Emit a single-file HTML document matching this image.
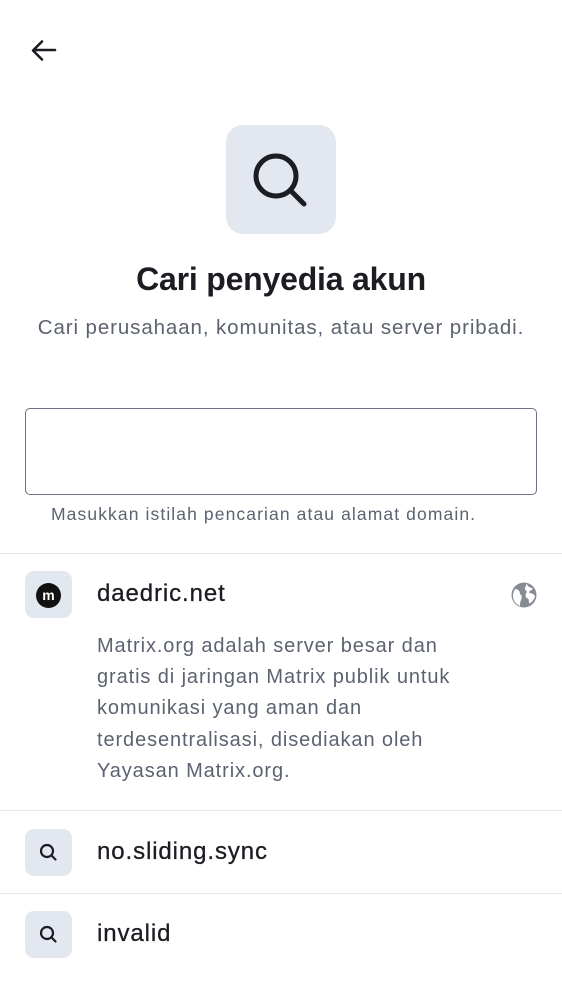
<!DOCTYPE html>
<html><head><meta charset="utf-8"><style>
*{margin:0;padding:0;box-sizing:border-box}
body{width:562px;height:1000px;background:#fff;font-family:"Liberation Sans",sans-serif;color:#1b1d22;position:relative;overflow:hidden}
.abs{position:absolute}
.sep{position:absolute;left:0;width:562px;height:1px;background:#e6e8ec}
.ib{position:absolute;left:25px;width:47px;height:47px;border-radius:9px;background:#e3e7ef}
.name{position:absolute;left:97px;font-size:24px;color:#1b1d22;letter-spacing:0.9px;-webkit-text-stroke:0.3px #1b1d22}
</style></head><body>
<svg class="abs" style="left:28px;top:36px" width="30" height="30" viewBox="0 0 30 30"><path d="M27 14H6M14 5.5L5 14.5l9 9" fill="none" stroke="#1b1d22" stroke-width="2.6" stroke-linecap="round" stroke-linejoin="round"/></svg>
<div class="abs" style="left:226px;top:125px;width:110px;height:109px;border-radius:17px;background:#e3e7ef"></div>
<svg class="abs" style="left:226px;top:125px" width="110" height="109" viewBox="0 0 110 109"><circle cx="50" cy="51" r="20" fill="none" stroke="#1b1d22" stroke-width="5"/><path d="M65 66l13 13" stroke="#1b1d22" stroke-width="5" stroke-linecap="round"/></svg>
<div class="abs" style="left:0;width:562px;top:261px;text-align:center;font-size:32px;font-weight:bold;letter-spacing:-0.2px">Cari penyedia akun</div>
<div class="abs" style="left:0;width:562px;top:316px;text-align:center;font-size:20.5px;color:#5c6370;letter-spacing:0.9px">Cari perusahaan, komunitas, atau server pribadi.</div>
<div class="abs" style="left:25px;top:408px;width:512px;height:87px;border:1.5px solid #6b7280;border-radius:5px"></div>
<div class="abs" style="left:51px;top:504px;font-size:17.5px;color:#5c6370;letter-spacing:1.1px">Masukkan istilah pencarian atau alamat domain.</div>
<div class="sep" style="top:553px"></div>
<div class="ib" style="top:571px"></div>
<div class="abs" style="left:36px;top:583px;width:25px;height:25px;border-radius:50%;background:#111;color:#fff;font-size:14px;font-weight:bold;text-align:center;line-height:24px">m</div>
<div class="name" style="top:580px">daedric.net</div>
<svg class="abs" style="left:511px;top:582px" width="26" height="26" viewBox="0 0 26 26"><circle cx="13" cy="13" r="12.5" fill="#868b94"/><path d="M4 7c3 0 5 2 5 5 2 1 2 4 1 6-1 2-1 4-1 6-4-2-7-5-7-10 0-3 1-5 2-7zM16 1.5c0 3 3 4 6 5-1 2-4 2-4 4 2 1 5 1 6 4-1 3-3 6-6 7 0-3 0-5-3-6-1-2 0-4 1-6-2-1-3-3 0-8z" fill="#fff"/></svg>
<div class="abs" style="left:97px;top:631px;width:385px;font-size:20px;line-height:31.2px;color:#5c6370;letter-spacing:0.9px">Matrix.org adalah server besar dan gratis di jaringan Matrix publik untuk komunikasi yang aman dan terdesentralisasi, disediakan oleh Yayasan Matrix.org.</div>
<div class="sep" style="top:810px"></div>
<div class="ib" style="top:829px"></div>
<svg class="abs" style="left:25px;top:829px" width="47" height="47" viewBox="0 0 47 47"><circle cx="22" cy="22" r="6" fill="none" stroke="#1b1d22" stroke-width="2.2"/><path d="M26.5 26.5l4 4" stroke="#1b1d22" stroke-width="2.2" stroke-linecap="round"/></svg>
<div class="name" style="top:838px">no.sliding.sync</div>
<div class="sep" style="top:893px"></div>
<div class="ib" style="top:911px"></div>
<svg class="abs" style="left:25px;top:911px" width="47" height="47" viewBox="0 0 47 47"><circle cx="22" cy="22" r="6" fill="none" stroke="#1b1d22" stroke-width="2.2"/><path d="M26.5 26.5l4 4" stroke="#1b1d22" stroke-width="2.2" stroke-linecap="round"/></svg>
<div class="name" style="top:920px">invalid</div>
</body></html>
